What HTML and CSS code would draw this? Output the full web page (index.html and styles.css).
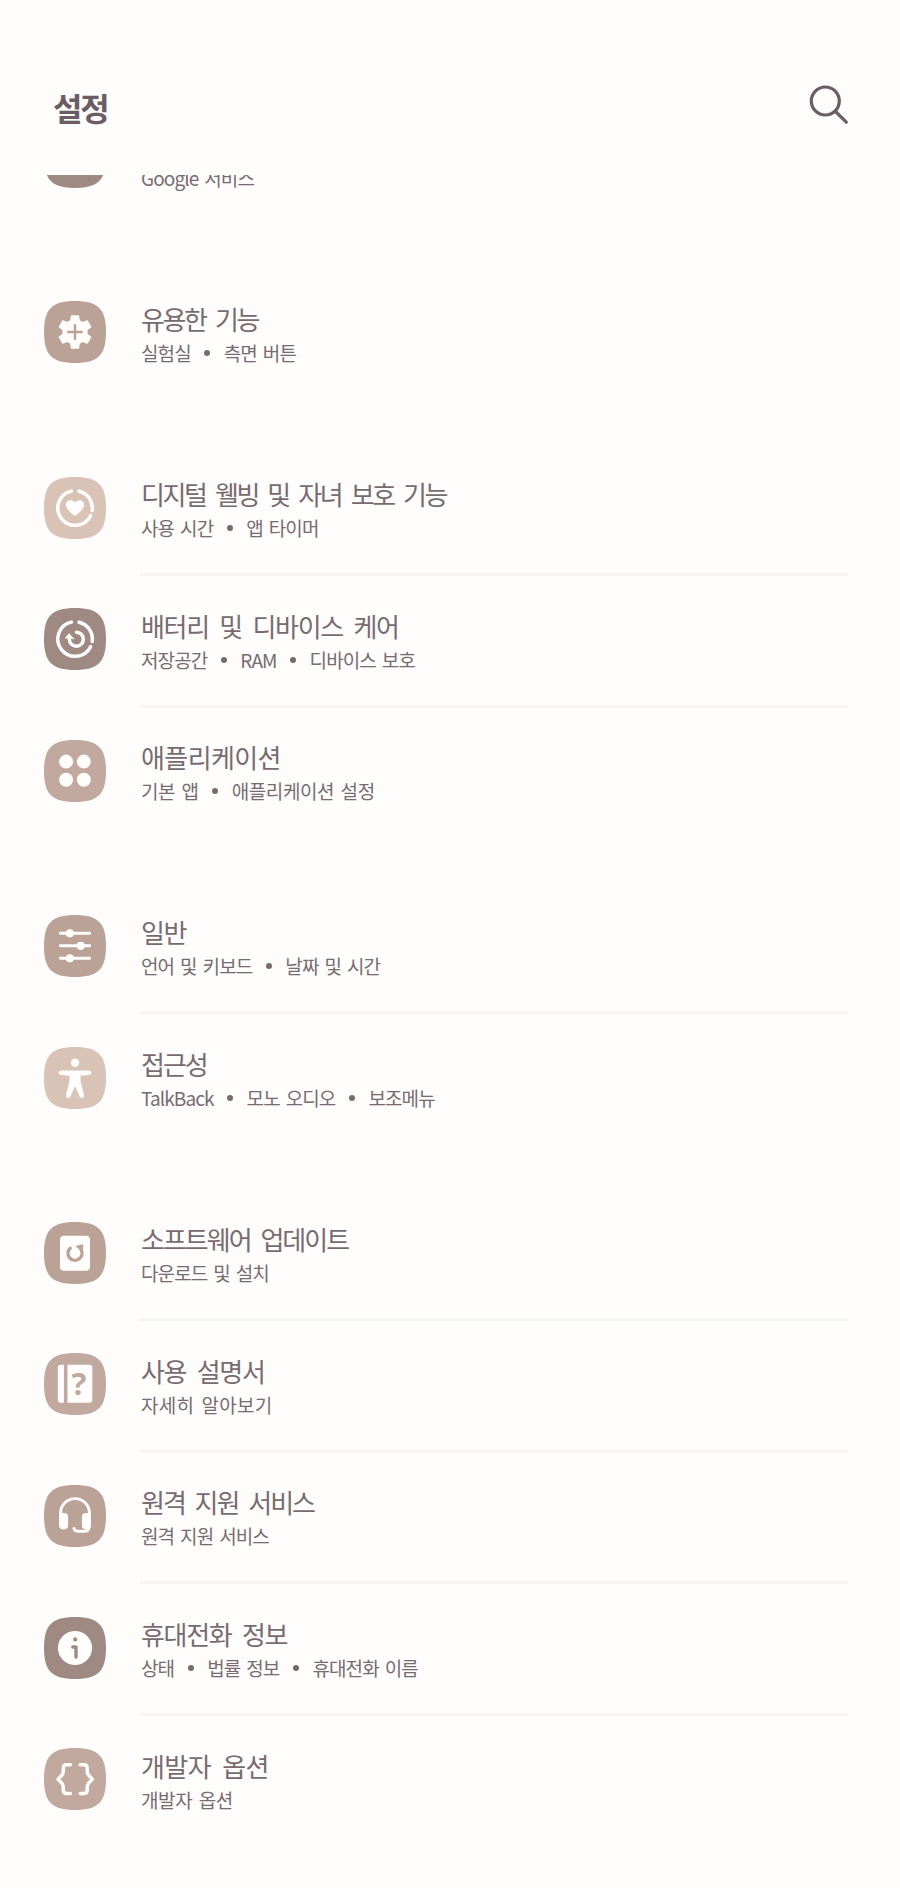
FILE: index.html
```html
<!DOCTYPE html>
<html lang="ko">
<head>
    <meta charset="UTF-8">
    <title>설정</title>
    <link rel="stylesheet" href="styles.css">
</head>
<body>
    <div class="top-bar">
        <h1>설정</h1>
        <svg class="search" viewBox="0 0 40 40">
            <circle cx="16.3" cy="16" r="14"/>
            <path d="M26.5 26.5L37.3 37.2"/>
        </svg>
    </div>

    <div class="list">
        <div class="group first">
            <div class="row">
                <svg class="icon dark" viewBox="0 0 62 62"><use href="#squircle"/></svg>
                <div class="text">
                    <p>Google 서비스</p>
                </div>
            </div>
        </div>

        <div class="group">
            <div class="row">
                <svg class="icon medium" viewBox="0 0 62 62">
                    <path id="squircle" d="M31 0C54 0 62 8 62 31S54 62 31 62 0 54 0 31 8 0 31 0Z"/>
                    <path class="fill" transform="translate(10 10) scale(1.75)" d="M19.14 12.94c.04-.3.06-.61.06-.94 0-.32-.02-.64-.07-.94l2.03-1.58c.18-.14.23-.41.12-.61l-1.92-3.32c-.12-.22-.37-.29-.59-.22l-2.39.96c-.5-.38-1.03-.7-1.62-.94l-.36-2.54c-.04-.24-.24-.41-.48-.41h-3.84c-.24 0-.43.17-.47.41l-.36 2.54c-.59.24-1.13.57-1.62.94l-2.39-.96c-.22-.08-.47 0-.59.22L2.74 8.87c-.12.21-.08.47.12.61l2.03 1.58c-.05.3-.09.63-.09.94s.02.64.07.94l-2.03 1.58c-.18.14-.23.41-.12.61l1.92 3.32c.12.22.37.29.59.22l2.39-.96c.5.38 1.03.7 1.62.94l.36 2.54c.05.24.24.41.48.41h3.84c.24 0 .44-.17.47-.41l.36-2.54c.59-.24 1.13-.56 1.62-.94l2.39.96c.22.08.47 0 .59-.22l1.92-3.32c.12-.22.07-.47-.12-.61l-2.01-1.58z"/>
                    <path class="cut" d="M31 24.3v13.4M24.3 31h13.4"/>
                </svg>
                <div class="text narrow">
                    <h2>유용한 기능</h2>
                    <p>실험실<i></i>측면 버튼</p>
                </div>
            </div>
        </div>

        <div class="group">
            <div class="row">
                <svg class="icon light" viewBox="0 0 62 62">
                    <use href="#squircle"/>
                    <path id="ring" class="line" d="M35 14.2A17.3 17.3 0 0 1 48.2 33.5M46.6 38.7A17.3 17.3 0 1 1 27.4 14.1"/>
                    <path class="fill" d="M31 38.9C29.5 38 21.8 32.5 21.8 27.8C21.8 23.2 28.2 21.5 31 25.6C33.8 21.5 40.2 23.2 40.2 27.8C40.2 32.5 32.5 38 31 38.9Z"/>
                </svg>
                <div class="text narrow">
                    <h2>디지털 웰빙 및 자녀 보호 기능</h2>
                    <p>사용 시간<i></i>앱 타이머</p>
                </div>
            </div>
            <div class="row">
                <svg class="icon dark" viewBox="0 0 62 62">
                    <use href="#squircle"/>
                    <use href="#ring"/>
                    <path class="line" d="M32.5 24.2A7 7 0 1 1 25.3 31.5"/>
                    <path class="fill" d="M20.7 30.2L25 25.2L30.6 31.2Z"/>
                </svg>
                <div class="text wide">
                    <h2>배터리 및 디바이스 케어</h2>
                    <p>저장공간<i></i>RAM<i></i>디바이스 보호</p>
                </div>
            </div>
            <div class="row">
                <svg class="icon soft" viewBox="0 0 62 62">
                    <use href="#squircle"/>
                    <g class="fill">
                        <circle cx="22.1" cy="21.6" r="7"/>
                        <circle cx="39.8" cy="21.6" r="7"/>
                        <circle cx="22.1" cy="39.7" r="7"/>
                        <circle cx="39.8" cy="39.7" r="7"/>
                    </g>
                </svg>
                <div class="text wider">
                    <h2>애플리케이션</h2>
                    <p>기본 앱<i></i>애플리케이션 설정</p>
                </div>
            </div>
        </div>

        <div class="group">
            <div class="row">
                <svg class="icon medium" viewBox="0 0 62 62">
                    <use href="#squircle"/>
                    <path class="line thin" d="M16.3 18.3h29.4M16.3 30.8h29.4M16.3 43.3h29.4"/>
                    <g class="fill">
                        <circle cx="25.8" cy="18.3" r="4.1"/>
                        <circle cx="36.7" cy="30.8" r="4.1"/>
                        <circle cx="25.8" cy="43.3" r="4.1"/>
                    </g>
                </svg>
                <div class="text wide">
                    <h2>일반</h2>
                    <p>언어 및 키보드<i></i>날짜 및 시간</p>
                </div>
            </div>
            <div class="row">
                <svg class="icon light" viewBox="0 0 62 62">
                    <use href="#squircle"/>
                    <circle class="fill" cx="31" cy="15.8" r="4.2"/>
                    <path class="fill" d="M17 23.4H45Q47.4 23.5 47.4 25.8Q47.3 27.8 45 28L36.5 28.7V34L40 48Q40.4 50.3 38.3 51Q36.4 51.4 35.6 49.5L31 39.3L26.4 49.5Q25.6 51.4 23.7 51Q21.6 50.3 22 48L25.5 34V28.7L17 28Q14.7 27.8 14.6 25.8Q14.6 23.5 17 23.4Z"/>
                </svg>
                <div class="text">
                    <h2>접근성</h2>
                    <p>TalkBack<i></i>모노 오디오<i></i>보조메뉴</p>
                </div>
            </div>
        </div>

        <div class="group">
            <div class="row">
                <svg class="icon medium" viewBox="0 0 62 62">
                    <use href="#squircle"/>
                    <rect class="fill" x="16" y="13.7" width="30" height="35" rx="4"/>
                    <path class="cut thick" d="M26.2 26.2A7 7 0 1 0 37.2 28"/>
                    <path d="M31.3 24L39.4 22.2L38.6 30.6Z"/>
                </svg>
                <div class="text">
                    <h2>소프트웨어 업데이트</h2>
                    <p>다운로드 및 설치</p>
                </div>
            </div>
            <div class="row">
                <svg class="icon soft" viewBox="0 0 62 62">
                    <use href="#squircle"/>
                    <path class="fill" d="M16.7 11.7H19.9V49.8H16.7Q13.8 49.8 13.8 47V14.5Q13.8 11.7 16.7 11.7ZM23.5 11.7H45.5Q48.3 11.7 48.3 14.5V47Q48.3 49.8 45.5 49.8H23.5Z"/>
                    <text x="34.8" y="42.3" text-anchor="middle">?</text>
                </svg>
                <div class="text wide manual">
                    <h2>사용 설명서</h2>
                    <p>자세히 알아보기</p>
                </div>
            </div>
            <div class="row">
                <svg class="icon medium" viewBox="0 0 62 62">
                    <use href="#squircle"/>
                    <path class="line thin" d="M16.6 31V28A14.4 14.4 0 0 1 45.4 28V31M45 42Q44.5 46.3 41 46.3H34.5Q30.5 46.3 30 43.5"/>
                    <rect class="fill" x="15.1" y="28" width="9" height="16.4" rx="3.8"/>
                    <rect class="fill" x="37.9" y="28" width="9" height="16.4" rx="3.8"/>
                </svg>
                <div class="text">
                    <h2>원격 지원 서비스</h2>
                    <p>원격 지원 서비스</p>
                </div>
            </div>
            <div class="row">
                <svg class="icon dark" viewBox="0 0 62 62">
                    <use href="#squircle"/>
                    <circle class="fill" cx="31" cy="31" r="17.1"/>
                    <circle cx="31.2" cy="22.4" r="2.1"/>
                    <path class="cut thick" d="M28.8 30H32V40"/>
                </svg>
                <div class="text wide">
                    <h2>휴대전화 정보</h2>
                    <p>상태<i></i>법률 정보<i></i>휴대전화 이름</p>
                </div>
            </div>
            <div class="row">
                <svg class="icon soft" viewBox="0 0 62 62">
                    <use href="#squircle"/>
                    <path class="line" d="M26.3 16.8H22.5Q19.3 16.8 19.3 20V23.5Q19.3 25.5 18 27L14 31.2L18 35.4Q19.3 36.9 19.3 38.9V42.2Q19.3 45.4 22.5 45.4H26.3M36.2 16.8H40Q43.2 16.8 43.2 20V23.5Q43.2 25.5 44.5 27L48.3 31.2L44.5 35.4Q43.2 36.9 43.2 38.9V42.2Q43.2 45.4 40 45.4H36.2"/>
                </svg>
                <div class="text wider">
                    <h2>개발자 옵션</h2>
                    <p>개발자 옵션</p>
                </div>
            </div>
        </div>
    </div>
</body>
</html>
```
FILE: styles.css
```css
body {
    margin: 0;
    background: #fefdfc;
    color: #786b70;
    font-family: "Noto Sans CJK KR", sans-serif;
    height: 1888px;
    overflow: hidden;
}

h1, h2, p {
    margin: 0;
    white-space: nowrap;
}

.top-bar {
    display: flex;
    justify-content: space-between;
    align-items: flex-start;
    height: 91px;
    padding: 84px 51px 0 53px;
}

h1 {
    font-size: 32px;
    line-height: 46px;
    letter-spacing: -2.3px;
    color: #6a5d66;
}

.search {
    width: 40px;
    height: 40px;
    margin-top: 1px;
    fill: none;
    stroke: #6a5d66;
    stroke-width: 3.2;
    stroke-linecap: round;
}

/* the list is scrolled, the first row is cut by the top bar */
.list {
    overflow: hidden;
}

.group {
    margin-bottom: 43.6px;
}

.first {
    margin-top: -82.3px;
}

.row {
    display: flex;
    height: 131.6px;
    padding: 0 52px 0 44px;
}

.icon {
    width: 62px;
    height: 62px;
    margin: 33.5px 34px 0 0;
    flex-shrink: 0;
}

.text {
    flex: 1;
    height: 133px;
    padding: 34px 0 0 1px;
    box-sizing: border-box;
    border-bottom: 3px solid #f7f5f3;
}

.row:last-child .text {
    border-bottom: none;
}

.first .text {
    padding-top: 68px;
}

h2 {
    font-size: 26px;
    font-weight: 400;
    line-height: 34px;
    letter-spacing: -2px;
    word-spacing: 4.5px;
}

p {
    display: flex;
    align-items: center;
    font-size: 19px;
    line-height: 34px;
    letter-spacing: -0.9px;
    word-spacing: 1.5px;
    white-space: pre;
}

p i {
    width: 6px;
    height: 6px;
    margin: 0 13.5px;
    border-radius: 50%;
    background: #786b70;
}

.narrow h2 {
    letter-spacing: -2.4px;
}

.wide h2 {
    letter-spacing: -1.3px;
}

.wider h2 {
    letter-spacing: -0.6px;
}

.wider p {
    letter-spacing: -0.4px;
}

.manual p {
    letter-spacing: 0.3px;
}

.medium {
    fill: #bba297;
    stroke: #bba297;
}

.light {
    fill: #d9c2b6;
    stroke: #d9c2b6;
}

.dark {
    fill: #9e8a83;
    stroke: #9e8a83;
}

.soft {
    fill: #c1a99f;
    stroke: #c1a99f;
}

.icon * {
    stroke-width: 0;
}

.icon .fill {
    fill: #fffefd;
}

.icon .line {
    fill: none;
    stroke: #fffefd;
    stroke-width: 3.5;
    stroke-linecap: round;
    stroke-linejoin: round;
}

.icon .thin {
    stroke-width: 2.9;
}

.icon .cut {
    fill: none;
    stroke-width: 2.4;
    stroke-linecap: round;
    stroke-linejoin: round;
}

.icon .thick {
    stroke-width: 3.4;
}

.icon text {
    font: 700 31px "Noto Sans", sans-serif;
}
```
